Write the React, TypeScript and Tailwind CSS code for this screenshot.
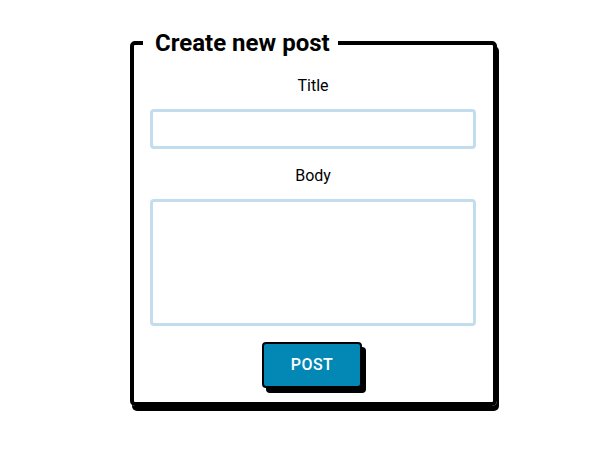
export default function App() {
  return (
    <div className="min-h-screen bg-white pt-[28px] font-['Roboto',sans-serif] text-black">
      <fieldset className="ml-[130px] w-[367px] rounded-[5px] border-4 border-black pl-4 pr-[17px] pb-[14px] shadow-[2px_5px_0_#000]">
        <legend className="-ml-[7px] pl-3 pr-2 text-[24px] font-bold leading-[30px]">
          Create new post
        </legend>
        <div className="flex flex-col items-center">
          <label className="mt-4 text-[16px] leading-6">Title</label>
          <input
            type="text"
            className="mt-[11px] h-10 w-full rounded-[4px] border-[3px] border-[#c2deee] px-2 outline-none"
          />
          <label className="mt-[15px] text-[16px] leading-6">Body</label>
          <textarea className="mt-[11px] h-[127px] w-full resize-none rounded-[4px] border-[3px] border-[#c2deee] px-2 outline-none" />
          <button
            type="button"
            className="mt-4 h-[46px] w-[100px] -translate-x-px rounded-[4px] border-2 border-black bg-[#0387b4] text-[16px] font-medium tracking-wide text-white shadow-[4px_5px_0_#000]"
          >
            POST
          </button>
        </div>
      </fieldset>
    </div>
  );
}
